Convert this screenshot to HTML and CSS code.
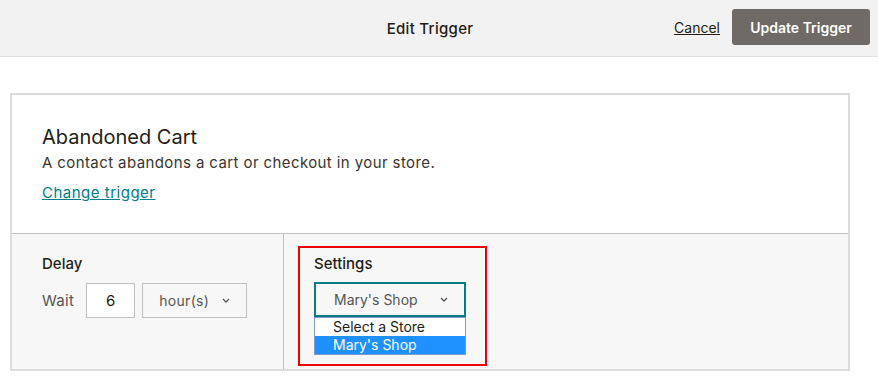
FILE: index.html
```html
<!DOCTYPE html>
<html lang="en">
<head>
  <meta charset="UTF-8" />
  <title>Edit Trigger</title>
  <link rel="stylesheet" href="styles.css">
</head>
<body>

  <header class="topbar">
    <h1 class="topbar-title">Edit Trigger</h1>
    <div class="topbar-actions">
      <a href="#" class="cancel">Cancel</a>
      <button class="btn-update">Update Trigger</button>
    </div>
  </header>

  <main class="page">
    <div class="card">
      <section class="trigger">
        <h2>Abandoned Cart</h2>
        <p>A contact abandons a cart or checkout in your store.</p>
        <a href="#" class="change">Change trigger</a>
      </section>

      <section class="options">
        <div class="delay">
          <h4>Delay</h4>
          <div class="wait-row">
            <span>Wait</span>
            <div class="num-box">6</div>
            <div class="unit-select">
              hour(s)
              <svg class="chev" width="8" height="5" viewBox="0 0 8 5"><path d="M1 1l3 3 3-3" fill="none" stroke="#555" stroke-width="1.3"/></svg>
            </div>
          </div>
        </div>

        <div class="settings-col">
          <div class="settings">
            <h4>Settings</h4>
            <div class="store-select">
              Mary's Shop
              <svg class="chev" width="8" height="5" viewBox="0 0 8 5"><path d="M1 1l3 3 3-3" fill="none" stroke="#555" stroke-width="1.3"/></svg>
            </div>
            <ul class="store-list">
              <li>Select a Store</li>
              <li class="active">Mary's Shop</li>
            </ul>
          </div>
        </div>
      </section>
    </div>
  </main>

</body>
</html>
```

FILE: styles.css
```css
:root {
  --ink: #241c15;
  --teal: #007c89;
  --line: #c0c0c0;
  --soft: #f7f7f7;
}

* {
  box-sizing: border-box;
  margin: 0;
  padding: 0;
}

body {
  font-family: "Inter", "Liberation Sans", sans-serif;
  color: var(--ink);
  background: #fff;
}

.topbar {
  height: 57px;
  background: #f2f2f2;
  border-bottom: 1px solid #e0e0e0;
  display: flex;
  align-items: center;
  justify-content: center;
  position: relative;
}

.topbar-title {
  font-size: 15px;
  font-weight: 500;
  margin-right: 18px;
  letter-spacing: 0.3px;
}

.topbar-actions {
  position: absolute;
  right: 8px;
  top: 9px;
  display: flex;
  align-items: center;
  gap: 12px;
}

.cancel {
  color: var(--ink);
  font-size: 14px;
}

.btn-update {
  height: 36px;
  width: 138px;
  background: #6f6a65;
  color: #fff;
  border: none;
  border-radius: 3px;
  font-family: inherit;
  font-size: 14px;
  font-weight: 600;
}

.page {
  padding: 36px 28px 0 10px;
}

.card {
  border: 2px solid #dcdcdc;
  width: 840px;
}

.trigger {
  padding: 30px 30px 0;
  height: 139px;
  border-bottom: 1px solid var(--line);
}

.trigger h2 {
  font-size: 20px;
  font-weight: 400;
  line-height: 24px;
}

.trigger p {
  font-size: 15px;
  line-height: 22px;
  margin-top: 3px;
  letter-spacing: 0.4px;
  color: #3b342e;
}

.change {
  display: inline-block;
  margin-top: 9px;
  font-size: 15px;
  color: var(--teal);
  letter-spacing: 0.5px;
}

.options {
  display: grid;
  grid-template-columns: 272px 1fr;
  background: var(--soft);
  height: 135px;
}

.options h4 {
  font-size: 15px;
  font-weight: 500;
  line-height: 20px;
}

.delay {
  border-right: 1px solid var(--line);
  padding: 20px 30px;
}

.wait-row {
  display: flex;
  align-items: center;
  margin-top: 9px;
  font-size: 15px;
  color: #555;
  letter-spacing: 0.3px;
}

.num-box {
  width: 49px;
  height: 35px;
  margin-left: 12px;
  background: #fff;
  border: 1px solid var(--line);
  display: flex;
  align-items: center;
  justify-content: center;
  color: var(--ink);
}

.unit-select {
  width: 105px;
  height: 35px;
  margin-left: 7px;
  border: 1px solid var(--line);
  display: flex;
  align-items: center;
  justify-content: center;
  gap: 13px;
  font-size: 14px;
}

.settings-col {
  padding: 12px 0 0 14px;
}

.settings {
  width: 189px;
  height: 120px;
  border: 2px solid #e00;
  padding: 6px 14px;
}

.store-select {
  margin-top: 8px;
  width: 152px;
  height: 35px;
  border: 2px solid #0b7a83;
  background: var(--soft);
  display: flex;
  align-items: center;
  justify-content: space-between;
  padding: 0 16px 0 18px;
  font-size: 14px;
  color: #555;
}

.store-list {
  list-style: none;
  width: 152px;
  border: 1px solid #7a9cd3;
  background: #fff;
  font-size: 14px;
  line-height: 18px;
}

.store-list li {
  padding-left: 18px;
}

.store-list li.active {
  background: #1e90ff;
  color: #fff;
}
```
